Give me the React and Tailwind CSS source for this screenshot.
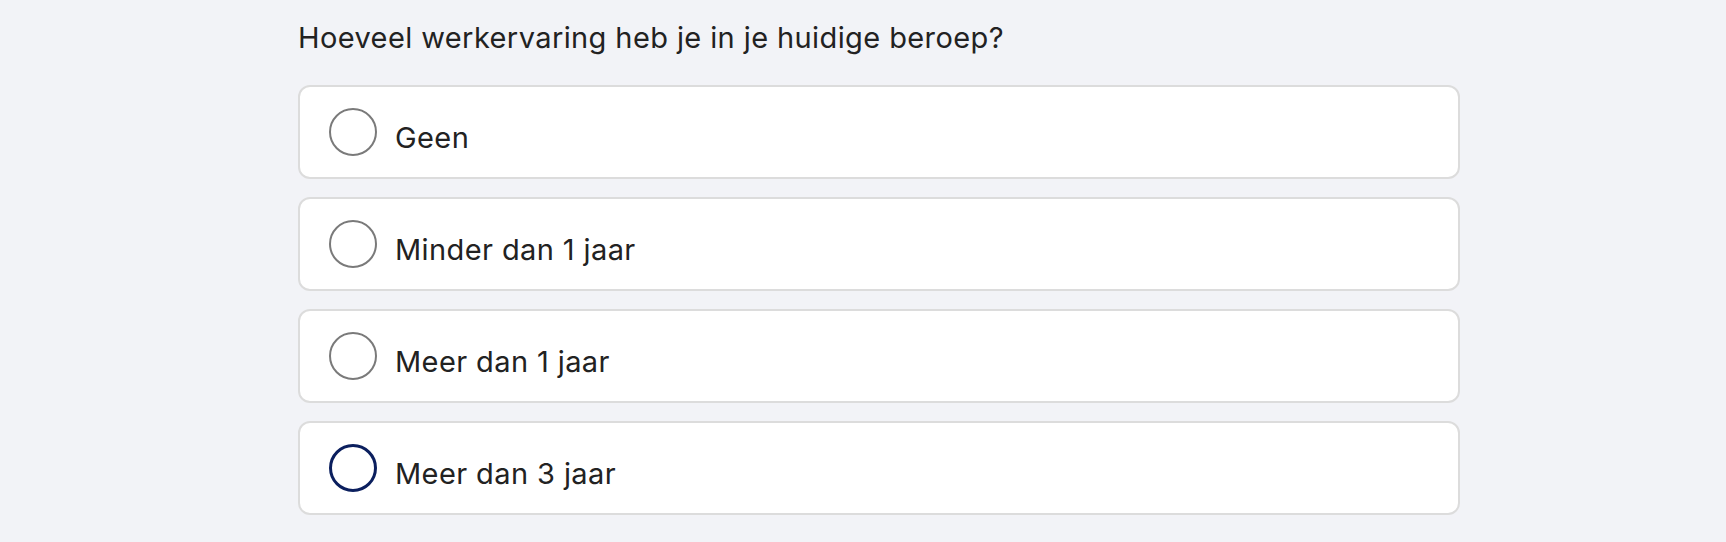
import React from "react";

const options = [
  { label: "Geen", selected: false },
  { label: "Minder dan 1 jaar", selected: false },
  { label: "Meer dan 1 jaar", selected: false },
  { label: "Meer dan 3 jaar", selected: true },
];

export default function App() {
  return (
    <div
      className="min-h-[542px] w-full bg-[#f2f3f7] pl-[298px] pt-[20px]"
      style={{ fontFamily: '"Inter", "Liberation Sans", sans-serif' }}
    >
      <div className="w-[1162px]">
        <h1 className="text-[29px] leading-[36px] tracking-[0.4px] text-[#222222] font-normal">
          Hoeveel werkervaring heb je in je huidige beroep?
        </h1>
        <div className="mt-[29px] flex flex-col gap-[18px]">
          {options.map((o) => (
            <label
              key={o.label}
              className="flex h-[94px] items-center rounded-[12px] border-2 border-[#dcdcdc] bg-white pl-[29px]"
            >
              <span
                className={
                  o.selected
                    ? "h-[48px] w-[48px] shrink-0 rounded-full border-[3px] border-[#0b1f5e]"
                    : "h-[48px] w-[48px] shrink-0 rounded-full border-2 border-[#7a7a7a]"
                }
              />
              <span className="ml-[18px] pt-[12px] text-[29px] leading-[36px] tracking-[0.4px] text-[#222222]">
                {o.label}
              </span>
            </label>
          ))}
        </div>
      </div>
    </div>
  );
}
